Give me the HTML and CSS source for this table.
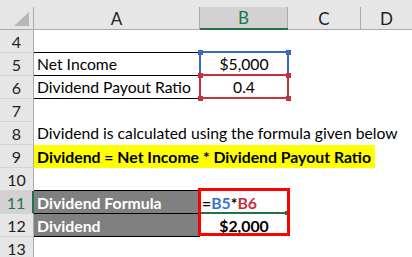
FILE: index.html
```html
<!DOCTYPE html>
<html>
<head>
<meta charset="utf-8">
<link rel="stylesheet" href="styles.css">
</head>
<body>
<div class="sheet">
  <div class="colhead corner"><div class="lbl"><svg width="16" height="15" viewBox="0 0 16 15" class="tri"><polygon points="15,0 15,14 0,14" fill="#b7b7b7"/></svg></div></div>
  <div class="colhead"><div class="lbl">A</div></div>
  <div class="colhead sel"><div class="lbl">B</div></div>
  <div class="colhead"><div class="lbl">C</div></div>
  <div class="colhead"><div class="lbl last">D</div></div>

  <div class="rh">4</div><div class="c bb"></div><div class="c"></div><div class="c"></div><div class="c"></div>
  <div class="rh">5</div><div class="c bb">Net Income</div><div class="c ctr">$5,000</div><div class="c"></div><div class="c"></div>
  <div class="rh">6</div><div class="c bb">Dividend Payout Ratio</div><div class="c ctr">0.4</div><div class="c"></div><div class="c"></div>
  <div class="rh">7</div><div class="c"></div><div class="c"></div><div class="c"></div><div class="c"></div>
  <div class="rh">8</div><div class="c span">Dividend is calculated using the formula given below</div>
  <div class="rh">9</div><div class="c span"><span class="hl">Dividend = Net Income * Dividend Payout Ratio</span></div>
  <div class="rh">10</div><div class="c bb"></div><div class="c"></div><div class="c"></div><div class="c"></div>
  <div class="rh rsel">11</div><div class="c gray bb">Dividend Formula</div><div class="c formula"><span>=</span><span class="ref-b">B5</span><span>*</span><span class="ref-r">B6</span></div><div class="c"></div><div class="c"></div>
  <div class="rh">12</div><div class="c gray bb">Dividend</div><div class="c ctr bold">$2,000</div><div class="c"></div><div class="c"></div>
  <div class="rh">13</div><div class="c"></div><div class="c"></div><div class="c"></div><div class="c"></div>

  <div class="range blue"></div>
  <div class="handle blue-h h1"></div>
  <div class="handle blue-h h2"></div>
  <div class="range red"></div>
  <div class="handle red-h h3"></div>
  <div class="handle red-h h4"></div>
  <div class="handle red-h h5"></div>
  <div class="handle red-h h6"></div>
  <div class="active-line"></div>
  <div class="fill-handle"></div>
  <div class="redbox"></div>
</div>
</body>
</html>
```
FILE: styles.css
```css
html, body {
  margin: 0;
  padding: 0;
  background: #ffffff;
}
body {
  width: 412px;
  height: 257px;
  overflow: hidden;
  font-family: Lato, "Liberation Sans", sans-serif;
  font-size: 15.7px;
  color: #000;
}
.sheet {
  position: relative;
  display: grid;
  grid-template-columns: 34px 166px 88px 73px 51px;
  grid-template-rows: 30px repeat(10, 23px);
}
.colhead {
  background: #e6e6e6;
  display: flex;
  align-items: flex-end;
  border-bottom: 1px solid #ababab;
}
.colhead .lbl {
  height: 22px;
  width: 100%;
  box-sizing: border-box;
  border-right: 1px solid #ababab;
  display: flex;
  align-items: center;
  justify-content: center;
  color: #222;
  font-size: 17px;
}
.colhead .lbl.last { border-right: none; }
.corner .lbl { justify-content: flex-end; align-items: flex-end; padding: 0 3px 2px 0; }
.colhead.sel { border-bottom: 2px solid #217346; }
.colhead.sel .lbl { background: #d2d2d2; color: #217346; height: 21px; }
.rh {
  background: #e6e6e6;
  border-right: 1px solid #ababab;
  border-bottom: 1px solid #d4d4d4;
  display: flex;
  align-items: center;
  justify-content: center;
  color: #222;
  box-sizing: border-box;
  font-size: 16px;
}
.rh.rsel {
  background: #d2d2d2;
  border-right: 2px solid #217346;
  color: #217346;
}
.c {
  box-sizing: border-box;
  border-bottom: 1px solid transparent;
  padding: 0 3px;
  display: flex;
  align-items: center;
  white-space: nowrap;
  overflow: visible;
}
.c.bb { border-bottom-color: #000; }
.c.ctr { justify-content: center; }
.c.bold { font-weight: bold; font-size: 15.8px; }
.c.span { grid-column: 2 / -1; }
.hl {
  background: #ffff00;
  font-weight: bold;
  font-size: 15.8px;
  margin-left: -3px;
  padding: 0 4px 0 3px;
  height: 23px;
  display: flex;
  align-items: center;
}
.c.gray {
  background: #808080;
  color: #fff;
  font-weight: bold;
  font-size: 15.8px;
}
.formula { font-weight: bold; font-size: 15.8px; padding-left: 2px; }
.ref-b { color: #3c6fd1; }
.ref-r { color: #c5313f; }

.range { position: absolute; box-sizing: border-box; }
.range.blue { left: 199px; top: 51px; width: 90px; height: 25px; border: 2px solid #3867c8; }
.range.red { left: 199px; top: 74px; width: 90px; height: 25px; border: 2px solid #c5313f; }
.handle { position: absolute; width: 5px; height: 5px; }
.blue-h { background: #3867c8; }
.red-h { background: #c5313f; }
.h1 { left: 198px; top: 50px; }
.h2 { left: 286px; top: 50px; }
.h3 { left: 198px; top: 73px; }
.h4 { left: 286px; top: 73px; }
.h5 { left: 198px; top: 96px; }
.h6 { left: 286px; top: 96px; }
.active-line { position: absolute; left: 200px; top: 212px; width: 86px; height: 2px; background: #217346; }
.fill-handle { position: absolute; left: 285px; top: 211px; width: 4px; height: 4px; background: #217346; }
.redbox { position: absolute; left: 198px; top: 188px; width: 92px; height: 48px; box-sizing: border-box; border: 3px solid #ff0000; }
```
